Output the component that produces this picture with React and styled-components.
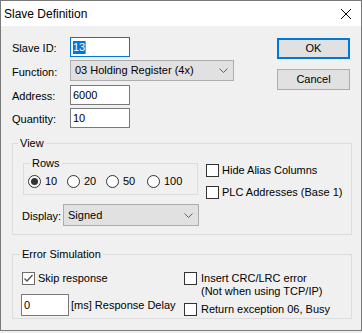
import React from 'react';
import styled, {createGlobalStyle} from 'styled-components';

const GlobalStyle = createGlobalStyle`
	html, body {
		margin:0;
		padding:0;
		background:#f0f0f0;
	}
	body {
		font-family:"Liberation Sans", Arial, sans-serif;
		font-size:11px;
		color:#000;
	}
	* {
		box-sizing:border-box;
	}
`

const Window = styled.div`
	width:362px;
	height:331px;
	border:1px solid #7a7a7a;
	background:#f0f0f0;
	display:flex;
	flex-direction:column;
`

const TitleBar = styled.div`
	flex:none;
	height:25px;
	background:#fff;
	display:flex;
	align-items:center;
	justify-content:space-between;
	padding-left:3px;
`

const Title = styled.span`
	font-size:12px;
	line-height:16px;
`

const CloseButton = styled.div`
	width:30px;
	height:25px;
	display:flex;
	align-items:center;
	justify-content:center;
`

const Body = styled.div`
	flex:1;
	padding:11px 9px 0 11px;
	display:flex;
	flex-direction:column;
`

const TopSection = styled.div`
	display:flex;
	justify-content:space-between;
	align-items:flex-start;
`

const Fields = styled.div`
	display:flex;
	flex-direction:column;
`

const FieldRow = styled.div`
	display:flex;
	align-items:center;
	height:${p=>p.$h}px;
	margin-top:${p=>p.$mt||0}px;
`

const Label = styled.span`
	width:${p=>p.$w}px;
	flex:none;
	line-height:13px;
	padding-top:3px;
	white-space:nowrap;
`

const TextBox = styled.div`
	width:${p=>p.$w}px;
	height:${p=>p.$h||20}px;
	margin-left:${p=>p.$ml||0}px;
	flex:none;
	background:#fff;
	border:1px solid ${p=>p.$focused?'#0078d7':'#7a7a7a'};
	padding-left:2px;
	display:flex;
	align-items:center;
	line-height:13px;
`

const Selection = styled.span`
	background:#0078d7;
	color:#fff;
	line-height:13px;
`

const Caret = styled.span`
	display:inline-block;
	width:1px;
	height:13px;
	background:#f08a24;
`

const Combo = styled.div`
	width:${p=>p.$w}px;
	height:${p=>p.$h}px;
	flex:none;
	background:#e1e1e1;
	border:1px solid #adadad;
	display:flex;
	align-items:center;
	justify-content:space-between;
	padding:0 5px 0 4px;
	line-height:13px;
`

const Buttons = styled.div`
	display:flex;
	flex-direction:column;
	gap:10px;
	margin:1px 2px 0 0;
`

const Button = styled.div`
	width:73px;
	height:21px;
	background:#e1e1e1;
	border:${p=>p.$default?'2px solid #0078d7':'1px solid #adadad'};
	display:flex;
	align-items:center;
	justify-content:center;
	line-height:13px;
`

const GroupBox = styled.fieldset`
	margin:${p=>p.$m};
	padding:${p=>p.$pad};
	border:1px solid #dcdcdc;
	min-width:0;
	width:${p=>p.$w?`${p.$w}px`:'auto'};
`

/* Chrome places the legend after the fieldset's left padding, so indent is relative to that */
const Caption = styled.legend`
	margin-left:${p=>p.$indent}px;
	padding:0 2px;
	line-height:13px;
	font-size:11px;
`

const ViewGrid = styled.div`
	display:grid;
	grid-template-columns:177px 1fr;
	column-gap:7px;
`

const Column = styled.div`
	display:flex;
	flex-direction:column;
`

const RadioRow = styled.div`
	display:flex;
	height:13px;
`

const RadioItem = styled.div`
	width:${p=>p.$w}px;
	flex:none;
	display:flex;
	align-items:center;
	gap:4px;
	line-height:13px;
`

const RadioCircle = styled.span`
	width:13px;
	height:13px;
	flex:none;
	border-radius:50%;
	border:1px solid #333;
	background:#fff;
	display:flex;
	align-items:center;
	justify-content:center;
	&::after {
		content:"";
		width:7px;
		height:7px;
		border-radius:50%;
		background:${p=>p.$checked?'#333':'transparent'};
	}
`

const CheckRow = styled.div`
	display:flex;
	align-items:${p=>p.$top?'flex-start':'center'};
	gap:${p=>p.$gap||3}px;
	margin-top:${p=>p.$mt||0}px;
	line-height:13px;
	white-space:nowrap;
`

const CheckBox = styled.span`
	width:13px;
	height:13px;
	flex:none;
	border:1px solid ${p=>p.$checked?'#6d6d6d':'#333'};
	background:#fff;
	display:flex;
	align-items:center;
	justify-content:center;
`

const ErrorGrid = styled.div`
	display:grid;
	grid-template-columns:162px 1fr;
`

const DelayRow = styled.div`
	display:flex;
	align-items:center;
	gap:2px;
	height:22px;
	margin-top:9px;
	line-height:13px;
`

const Chevron = () => (
	<svg width="9" height="5" viewBox="0 0 9 5">
		<path d="M0.5 0.5 L4.5 4.5 L8.5 0.5" fill="none" stroke="#606060" strokeWidth="1"/>
	</svg>
)

const CloseIcon = () => (
	<svg width="10" height="10" viewBox="0 0 10 10">
		<path d="M0 0 L10 10 M10 0 L0 10" stroke="#000" strokeWidth="1"/>
	</svg>
)

const CheckMark = () => (
	<svg width="11" height="11" viewBox="0 0 11 11">
		<path d="M1.5 5.5 L4 8 L9.5 2" fill="none" stroke="#555" strokeWidth="1.4"/>
	</svg>
)

const Radio = ({label,checked,w}) => (
	<RadioItem $w={w}>
		<RadioCircle $checked={checked}/>
		<span>{label}</span>
	</RadioItem>
)

const Check = ({children,checked,mt,gap,top}) => (
	<CheckRow $mt={mt} $gap={gap} $top={top}>
		<CheckBox $checked={checked}>{checked && <CheckMark/>}</CheckBox>
		<span>{children}</span>
	</CheckRow>
)

export default function App() {
	return (
		<>
			<GlobalStyle/>
			<Window>
				<TitleBar>
					<Title>Slave Definition</Title>
					<CloseButton><CloseIcon/></CloseButton>
				</TitleBar>
				<Body>
					<TopSection>
						<Fields>
							<FieldRow $h={20}>
								<Label $w={58}>Slave ID:</Label>
								<TextBox $w={60} $focused><Selection>13</Selection><Caret/></TextBox>
							</FieldRow>
							<FieldRow $h={21} $mt={3}>
								<Label $w={58}>Function:</Label>
								<Combo $w={164} $h={21}><span>03 Holding Register (4x)</span><Chevron/></Combo>
							</FieldRow>
							<FieldRow $h={20} $mt={4}>
								<Label $w={58}>Address:</Label>
								<TextBox $w={60}>6000</TextBox>
							</FieldRow>
							<FieldRow $h={20} $mt={3}>
								<Label $w={58}>Quantity:</Label>
								<TextBox $w={60}>10</TextBox>
							</FieldRow>
						</Fields>
						<Buttons>
							<Button $default>OK</Button>
							<Button>Cancel</Button>
						</Buttons>
					</TopSection>

					<GroupBox $m="9px 0 0 0" $pad="0 0 8px 9px">
						<Caption $indent={-4}>View</Caption>
						<ViewGrid>
							<Column>
								<GroupBox $m="7px 0 0 1px" $pad="5px 0 6px 4px" $w={175}>
									<Caption $indent={2}>Rows</Caption>
									<RadioRow>
										<Radio label="10" checked w={39}/>
										<Radio label="20" w={39}/>
										<Radio label="50" w={41}/>
										<Radio label="100" w={40}/>
									</RadioRow>
								</GroupBox>
								<FieldRow $h={22} $mt={9}>
									<Label $w={41}>Display:</Label>
									<Combo $w={136} $h={22}><span>Signed</span><Chevron/></Combo>
								</FieldRow>
							</Column>
							<Column>
								<Check mt={14}>Hide Alias Columns</Check>
								<Check mt={9}>PLC Addresses (Base 1)</Check>
							</Column>
						</ViewGrid>
					</GroupBox>

					<GroupBox $m="13px 0 0 0" $pad="0 0 2px 9px">
						<Caption $indent={-2}>Error Simulation</Caption>
						<ErrorGrid>
							<Column>
								<Check mt={11} checked>Skip response</Check>
								<DelayRow>
									<TextBox $w={48} $h={22} $ml={-1}>0</TextBox>
									<span>[ms] Response Delay</span>
								</DelayRow>
							</Column>
							<Column>
								<Check mt={11} gap={4} top>Insert CRC/LRC error<br/>(Not when using TCP/IP)</Check>
								<Check mt={5} gap={4}>Return exception 06, Busy</Check>
							</Column>
						</ErrorGrid>
					</GroupBox>
				</Body>
			</Window>
		</>
	);
}
